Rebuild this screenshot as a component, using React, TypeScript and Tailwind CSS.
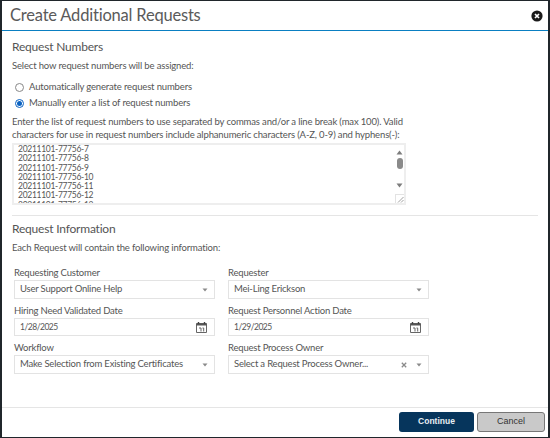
import { ReactNode } from 'react';

const numbers = ['7', '8', '9', '10', '11', '12', '13'];

function Caret() {
  return (
    <svg width="6" height="4" viewBox="0 0 6 4" className="shrink-0">
      <path d="M0.5 0.5h5L3 3.5z" fill="#8a8a8a" />
    </svg>
  );
}

function CalendarIcon() {
  return (
    <svg width="11" height="11" viewBox="0 0 11 11" className="mr-[1px] shrink-0">
      <path d="M0.5 1.5h10v9h-10z" fill="#fff" stroke="#666" />
      <path d="M0.5 1.5h10v2h-10z" fill="#555" />
      <path d="M2.5 0v2M8.5 0v2" stroke="#444" strokeWidth="1.4" />
      <path d="M3 6h2v3.5M6.5 6h1.2v3.5" fill="none" stroke="#666" strokeWidth="1" />
    </svg>
  );
}

function Field({ label, children, date }: { label: string; children: ReactNode; date?: boolean }) {
  return (
    <div className="flex w-[201px] flex-col">
      <label className="h-[14px] text-[9.5px] leading-[14px] tracking-[-0.2px] text-[#555]">{label}</label>
      <div
        className={`flex items-center justify-between whitespace-nowrap border border-[#e3e3e3] bg-white pl-[5px] pr-[6px] text-[9.5px] tracking-[-0.2px] text-[#555] ${
          date ? 'h-[18px]' : 'h-[19px]'
        }`}
      >
        {children}
      </div>
    </div>
  );
}

export default function App() {
  return (
    <div className="flex h-[438px] w-[550px] flex-col border border-x-2 border-[#20262b] bg-white font-['Lato',sans-serif]">
      {/* Header */}
      <div className="flex h-[30px] shrink-0 items-center justify-between border-b-[1.5px] border-[#0a7fc2] pl-[8px] pr-[5px]">
        <h1 className="text-[16.5px] font-normal tracking-[-0.2px] text-[#5a5a5a]">Create Additional Requests</h1>
        <svg width="12" height="12" viewBox="0 0 12 12">
          <circle cx="6" cy="6" r="5.6" fill="#1a1a1a" />
          <path d="M4 4l4 4M8 4l-4 4" stroke="#fff" strokeWidth="1.7" />
        </svg>
      </div>

      {/* Body */}
      <div className="flex min-h-0 flex-1 flex-col pl-[10px] pr-[10px]">
        <h2 className="mt-[7px] text-[12px] leading-[18px] tracking-[-0.2px] text-[#555]">Request Numbers</h2>
        <p className="mt-[2px] text-[9.5px] leading-[15px] tracking-[-0.15px] text-[#555]">Select how request numbers will be assigned:</p>

        <div className="mt-[7px] flex flex-col gap-[2px] pl-[3px]">
          <label className="flex h-[14px] items-center gap-[5px] text-[9.5px] tracking-[-0.15px] text-[#555]">
            <span className="h-[9px] w-[9px] rounded-full border border-[#888] bg-white" />
            Automatically generate request numbers
          </label>
          <label className="flex h-[14px] items-center gap-[5px] text-[9.5px] tracking-[-0.15px] text-[#555]">
            <span className="flex h-[9px] w-[9px] items-center justify-center rounded-full border border-[#0a62c2] bg-white">
              <span className="h-[5px] w-[5px] rounded-full bg-[#0a62c2]" />
            </span>
            Manually enter a list of request numbers
          </label>
        </div>

        <p className="mt-[5px] w-[395px] text-[9.5px] leading-[13px] tracking-[-0.15px] text-[#555]">
          Enter the list of request numbers to use separated by commas and/or a line break (max 100). Valid characters
          for use in request numbers include alphanumeric characters (A-Z, 0-9) and hyphens(-):
        </p>

        {/* Number list */}
        <div className="mt-[2px] flex h-[62px] w-[394px] shrink-0 border-2 border-[#eeeeee] bg-white">
          <div className="min-w-0 flex-1 overflow-hidden pl-[4px] text-[8.5px] leading-[9.3px] tracking-[-0.3px] text-[#555]">
            {numbers.map((n) => (
              <div key={n}>20211101-77756-{n}</div>
            ))}
          </div>
          <div className="flex w-[9px] shrink-0 flex-col items-center bg-white pt-[5px]">
            <svg width="7" height="5" viewBox="0 0 7 5">
              <path d="M0.5 4.5h6L3.5 0.5z" fill="#7d7d7d" />
            </svg>
            <span className="mt-[3px] h-[11px] w-[6px] rounded-[3px] bg-[#8a8a8a]" />
            <svg width="7" height="5" viewBox="0 0 7 5" className="mt-[14px]">
              <path d="M0.5 0.5h6L3.5 4.5z" fill="#7d7d7d" />
            </svg>
            <div className="mt-auto flex h-[9px] w-[9px] items-end justify-end border-l border-t border-[#e3e3e3]">
              <svg width="7" height="7" viewBox="0 0 7 7">
                <path d="M1 6.5L6.5 1M4 6.5L6.5 4" stroke="#888" strokeWidth="0.8" />
              </svg>
            </div>
          </div>
        </div>

        <hr className="mt-[10px] w-[526px] border-t border-[#e5e5e5]" />

        <h2 className="mt-[4px] text-[12px] leading-[18px] tracking-[-0.2px] text-[#555]">Request Information</h2>
        <p className="mt-[2px] text-[9.5px] leading-[15px] tracking-[-0.15px] text-[#555]">Each Request will contain the following information:</p>

        {/* Form fields */}
        <div className="mt-[11px] grid grid-cols-[201px_201px] gap-x-[13px] gap-y-[5px] pl-[2px]">
          <Field label="Requesting Customer">
            <span>User Support Online Help</span>
            <Caret />
          </Field>
          <Field label="Requester">
            <span>Mei-Ling Erickson</span>
            <Caret />
          </Field>
          <Field label="Hiring Need Validated Date" date>
            <span className="text-[8.5px] tracking-[-0.5px]">1/28/2025</span>
            <CalendarIcon />
          </Field>
          <Field label="Request Personnel Action Date" date>
            <span className="text-[8.5px] tracking-[-0.5px]">1/29/2025</span>
            <CalendarIcon />
          </Field>
          <Field label="Workflow">
            <span>Make Selection from Existing Certificates</span>
            <Caret />
          </Field>
          <Field label="Request Process Owner">
            <span>Select a Request Process Owner...</span>
            <span className="flex items-center gap-[9px]">
              <svg width="6" height="6" viewBox="0 0 6 6">
                <path d="M0.8 0.8l4.4 4.4M5.2 0.8L0.8 5.2" stroke="#8a8a8a" strokeWidth="1.3" />
              </svg>
              <Caret />
            </span>
          </Field>
        </div>
      </div>

      {/* Footer */}
      <div className="flex h-[30px] shrink-0 items-center justify-end gap-[3px] border-t border-[#e5e5e5] pb-[2px] pr-[3px] font-['Liberation_Sans',sans-serif]">
        <button className="h-[20px] w-[75px] rounded-[3px] bg-[#06355c] text-[8.5px] font-bold text-[#e8eef3]">Continue</button>
        <button className="h-[20px] w-[68px] rounded-[3px] border border-[#777] bg-[#c9c9c9] text-[9px] text-[#333]">Cancel</button>
      </div>
    </div>
  );
}
